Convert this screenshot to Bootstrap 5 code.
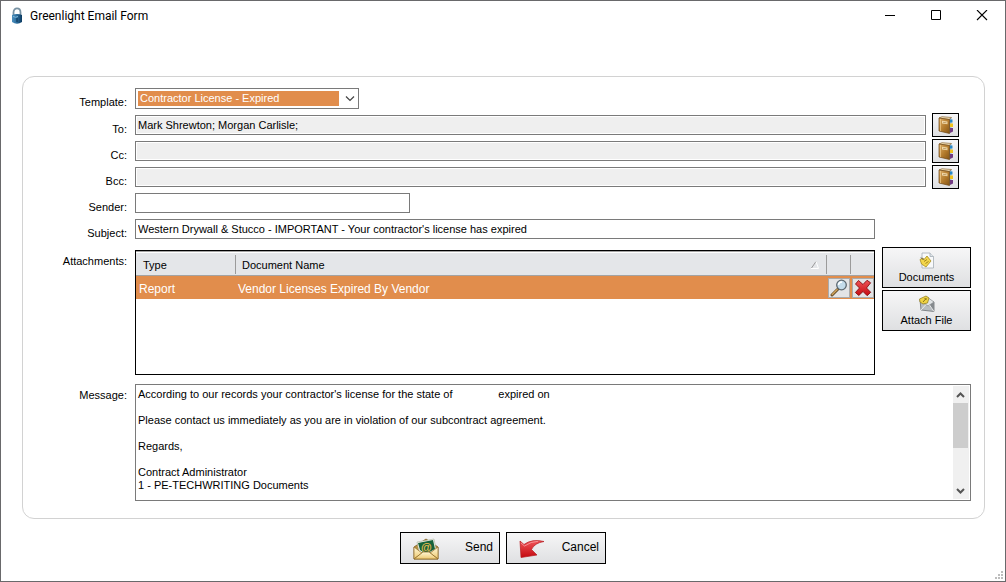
<!DOCTYPE html>
<html lang="en">
<head>
<meta charset="utf-8">
<meta name="viewport" content="width=device-width, initial-scale=1">
<title>Greenlight Email Form</title>
<link href="https://cdn.jsdelivr.net/npm/bootstrap@5.3.0/dist/css/bootstrap.min.css" rel="stylesheet">
<style>
  body { font-family: "Liberation Sans", Arial, sans-serif; font-size: 11px; line-height: 16px; color: #000; background: #fff; }
  .app-window { border: 1px solid #69696b; }
  .title-bar { height: 30px; font-family: Roboto, "Open Sans", sans-serif; font-size: 12px; padding-left: 9px; }
  .title-bar h1 { font-size: 12px; line-height: 16px; font-weight: 400; padding-left: 6px; }
  .caption-btn { width: 46px; height: 29px; border: 0; background: none; padding: 0; }
  .form-panel { margin: 45px 20px 0 21px; border: 1px solid #d2d2d2; border-radius: 12px; padding: 10px 13px 17px 0; }
  .field-row { display: grid; grid-template-columns: 104px minmax(0, 1fr); column-gap: 8px; margin-bottom: 2px; }
  .field-row > label, .field-row > .field-caption { text-align: right; margin-top: 8px; }
  .field-body { min-height: 24px; display: flex; align-items: center; }
  .template-row .field-body { align-items: flex-start; padding-top: 1px; }
  .template-row > label { margin-top: 7px; }
  .box { height: 20px; border: 1px solid #7a7a7a; border-radius: 0; padding: 0 2px; font-size: 11px; line-height: 16px; color: #000; background: #fff; outline: 0; }
  .box[readonly] { background: #efefef; box-shadow: inset 0 0 0 1px #fff; }
  .sender-box { width: 275px; }
  .template-pick { width: 224px; }
  .template-pick select { display: block; appearance: none; width: 100%; height: 21px; padding: 0 22px 1px 4px; color: #fff; border: 1px solid #7a7a7a; border-radius: 0; font-size: 11px; outline: 0;
    background: linear-gradient(#e18d4c, #e18d4c) 2px 2px / calc(100% - 21px) 15px no-repeat #fff; }
  .template-pick select option { color: #000; }
  .template-pick svg { right: 4px; top: 8px; pointer-events: none; }
  .tool-btn { border: 1px solid #000; border-radius: 0; background: linear-gradient(#f6f6f7, #dfe0e2); color: #000; padding: 0; }
  .book-btn { width: 27px; height: 24px; margin: 0 12px 0 6px; }
  .short-field { margin-right: 96px; }
  .side-btns { flex: 0 0 89px; margin-left: 7px; gap: 2px; }
  .side-btns .tool-btn { height: 41px; font-size: 11px; line-height: 14px; }
  .attach-row { margin-top: 6px; margin-bottom: 9px; }
  .attach-row > .field-caption { margin-top: 6px; }
  .attach-box { height: 125px; margin-top: 3px; border: 1px solid #000; min-width: 0; }
  .attach-table { width: 100%; table-layout: fixed; border-collapse: separate; border-spacing: 0; }
  .attach-table th { height: 25px; font-weight: 400; background: #e4e6e9; border-bottom: 1px solid #a3a3a3; border-top: 1px solid #a3a3a3; padding: 3px 7px 0; box-shadow: inset 0 1px #fff; }
  .attach-table th + th { background: linear-gradient(#9b9b9b, #9b9b9b) 0 3px / 1px 19px no-repeat #e4e6e9; }
  .attach-table td { height: 23px; background: #e18d4c; color: #fff; font-size: 12px; padding: 3px 3px 0; }
  .attach-table td.act { padding: 0 0 0 2px; vertical-align: middle; }
  .col-type { width: 99px; }
  .col-act { width: 24px; }
  .cell-btn { width: 22px; height: 20px; border: 1px solid #aaa; background: #e3e4e6; padding: 0; display: flex; align-items: center; justify-content: center; }
  .message-row { margin-bottom: 0; }
  .message-row > label { margin-top: 3px; }
  .message-box { height: 117px; border: 1px solid #7a7a7a; }
  .message-box textarea { border: 0; outline: 0; resize: none; overflow: hidden; padding: 3px 2px 0; font-size: 11px; line-height: 13px; color: #000; }
  .scroll-rail { width: 16px; margin: 1px; background: #f0f0f0; }
  .scroll-rail .rail-thumb { height: 45px; width: 15px; background: #cdcdcd; }
  .scroll-rail svg { height: 17px; width: 15px; }
  .bottom-btns { margin-top: 13px; gap: 6px; }
  .bottom-btns .tool-btn { width: 100px; height: 32px; font-size: 12px; padding: 2px 6px 0 12px; }
  .bottom-btns span { padding-bottom: 4px; }
  .size-grip { right: 2px; bottom: 2px; }
  svg { display: block; flex: none; }
</style>
</head>
<body>
<svg width="0" height="0" class="position-absolute" aria-hidden="true">
  <defs>
    <linearGradient id="leather" x1="0" x2="1" y1="0" y2="1"><stop offset="0" stop-color="#dcae68"/><stop offset=".55" stop-color="#b37b2c"/><stop offset="1" stop-color="#835416"/></linearGradient>
    <linearGradient id="redShade" x1="0" x2="0" y1="0" y2="1"><stop offset="0" stop-color="#f0565a"/><stop offset="1" stop-color="#c4090f"/></linearGradient>
    <linearGradient id="steel" x1="0" x2="1"><stop offset="0" stop-color="#4c8fbd"/><stop offset=".45" stop-color="#2c6f9f"/><stop offset="1" stop-color="#0c3a60"/></linearGradient>
    <linearGradient id="paper" x1="0" x2="0" y1="0" y2="1"><stop offset="0" stop-color="#fff8d8"/><stop offset="1" stop-color="#edc870"/></linearGradient>
    <symbol id="address-book" viewBox="0 0 16 18">
      <path d="M11 2l2.500 0v13l-2.500 2.500z" fill="#9cbbd3"/>
      <path d="M12 3.500h2.500v3H12z" fill="#2687c7"/><path d="M12 7.500h3v3.500h-3z" fill="#f0c31c"/><path d="M12 12h3v3.500l-3 1.500z" fill="#713a82"/>
      <path d="M1 2l3-1.300 9.500 .8L11 3.500z" fill="#f4e3bd" stroke="#79501d" stroke-width=".6"/>
      <path d="M1 2l10.500 1.500v14L1 15z" fill="url(#leather)" stroke="#6d4514" stroke-width=".7"/>
      <path d="M2.500 3v12" stroke="#f0ce91" stroke-width=".7"/>
      <path d="M4 4.800l5.500 .8v2.700L4 7.500z" fill="#f0d7a8"/><path d="M5 6.300l3.500 .5" stroke="#a07a40" stroke-width=".6"/>
    </symbol>
  </defs>
</svg>

<div class="app-window min-vh-100 position-relative">
  <header class="title-bar d-flex align-items-center">
    <svg width="14" height="18" viewBox="0 0 14 18" aria-hidden="true">
      <path d="M3.500 9V5.500C3.500 0 10.500 0 10.500 5.500V9" fill="none" stroke="#7892a3" stroke-width="1.800"/>
      <path d="M2 8q5-2 10 0v7q-5 3.500-10 0z" fill="url(#steel)"/>
      <path d="M3 9.500q3 1.500 5 0" stroke="#83b9d9" fill="none"/><path d="M7 11v4" stroke="#0a3151"/>
    </svg>
    <h1 class="mb-0 flex-grow-1">Greenlight Email Form</h1>
    <button class="caption-btn d-flex align-items-center justify-content-center" type="button" aria-label="Minimize"><svg width="12" height="12"><path d="M1 5.500h10" stroke="#000"/></svg></button>
    <button class="caption-btn d-flex align-items-center justify-content-center" type="button" aria-label="Maximize"><svg width="12" height="12"><path d="M1.500 .5h9v9h-9z" fill="none" stroke="#000"/></svg></button>
    <button class="caption-btn d-flex align-items-center justify-content-center" type="button" aria-label="Close"><svg width="12" height="12"><path d="M1 0l10 10M11 0L1 10" stroke="#000" stroke-width="1.100"/></svg></button>
  </header>

  <form>
    <main class="form-panel">
      <div class="field-row template-row">
        <label for="template">Template:</label>
        <div class="field-body">
          <div class="template-pick position-relative">
            <select id="template"><option>Contractor License - Expired</option></select>
            <svg class="position-absolute" width="10" height="6"><path d="M1 .5l4 4 4-4" fill="none" stroke="#444" stroke-width="1.200"/></svg>
          </div>
        </div>
      </div>
      <div class="field-row">
        <label for="to">To:</label>
        <div class="field-body">
          <input class="box flex-grow-1" id="to" type="text" readonly value="Mark Shrewton; Morgan Carlisle;">
          <button class="tool-btn book-btn d-flex align-items-center justify-content-center" type="button" aria-label="Choose To recipients"><svg width="16" height="18"><use href="#address-book"/></svg></button>
        </div>
      </div>
      <div class="field-row">
        <label for="cc">Cc:</label>
        <div class="field-body">
          <input class="box flex-grow-1" id="cc" type="text" readonly>
          <button class="tool-btn book-btn d-flex align-items-center justify-content-center" type="button" aria-label="Choose Cc recipients"><svg width="16" height="18"><use href="#address-book"/></svg></button>
        </div>
      </div>
      <div class="field-row">
        <label for="bcc">Bcc:</label>
        <div class="field-body">
          <input class="box flex-grow-1" id="bcc" type="text" readonly>
          <button class="tool-btn book-btn d-flex align-items-center justify-content-center" type="button" aria-label="Choose Bcc recipients"><svg width="16" height="18"><use href="#address-book"/></svg></button>
        </div>
      </div>
      <div class="field-row">
        <label for="sender">Sender:</label>
        <div class="field-body"><input class="box sender-box" id="sender" type="text"></div>
      </div>
      <div class="field-row">
        <label for="subject">Subject:</label>
        <div class="field-body"><input class="box flex-grow-1 short-field" id="subject" type="text" value="Western Drywall &amp; Stucco - IMPORTANT - Your contractor's license has expired"></div>
      </div>

      <div class="field-row attach-row">
        <span class="field-caption" id="attach-caption">Attachments:</span>
        <div class="d-flex align-items-start">
          <div class="attach-box flex-grow-1">
            <table class="attach-table" aria-labelledby="attach-caption">
              <colgroup><col class="col-type"><col><col class="col-act"><col class="col-act"></colgroup>
              <thead><tr>
                <th>Type</th>
                <th><span class="d-flex justify-content-between align-items-center">Document Name <svg width="8" height="8"><path d="M.5 7L5 .5" stroke="#999"/><path d="M5 .5L7.500 7.500H0" fill="none" stroke="#fff"/></svg></span></th>
                <th></th><th></th>
              </tr></thead>
              <tbody><tr>
                <td>Report</td>
                <td>Vendor Licenses Expired By Vendor</td>
                <td class="act"><button class="cell-btn" type="button" aria-label="View document">
                  <svg width="18" height="18" viewBox="0 0 18 18"><path d="M2 16l5.500-5.500" stroke="#69502c" stroke-width="3" stroke-linecap="round"/><path d="M2.200 15.500l5-5" stroke="#d3a55c" stroke-width="1.300" stroke-linecap="round"/><circle cx="11.500" cy="6" r="4.800" fill="#c4dceb" stroke="#5d6870" stroke-width="1.300"/><path d="M8.500 6q.3-3 3.500-3" fill="none" stroke="#fff" stroke-width="1.500"/></svg></button></td>
                <td class="act"><button class="cell-btn" type="button" aria-label="Remove document">
                  <svg width="18" height="18" viewBox="0 0 18 18"><path d="M4.500 1.500L9 5.500l4-4.200 3.600 2.500L12.500 9l4.200 4.300-3.500 3.400L9 12.500l-4.200 4-3.400-3L5.500 9 1.500 5z" fill="url(#redShade)" stroke="#870c10" stroke-width=".9" stroke-linejoin="round"/></svg></button></td>
              </tr></tbody>
            </table>
          </div>
          <div class="side-btns d-flex flex-column">
            <button class="tool-btn d-flex flex-column align-items-center justify-content-center" type="button">
              <svg width="16" height="18" viewBox="0 0 16 18"><path d="M3 1h8l3.500 3.500V16H3z" fill="#f8f9fa" stroke="#a4adb5" stroke-width=".8"/><path d="M11 1v3.500h3.500" fill="#dfe5e9" stroke="#a4adb5" stroke-width=".8"/><path d="M1 7.500L4 6l1 1.500L8 4l4 5-5 6-4.500-3z" fill="#f3d64b" stroke="#9c8113" stroke-width=".7"/><path d="M5 9.500l3-2M6.500 11.500l3-2" stroke="#8f7410" stroke-width=".8"/><path d="M4.500 8L2 5.500" stroke="#555"/></svg>
              Documents</button>
            <button class="tool-btn d-flex flex-column align-items-center justify-content-center" type="button">
              <svg width="18" height="18" viewBox="0 0 18 18"><path d="M2 5l14 2v9.500L3 15z" fill="#b8bdc1" stroke="#6b7074" stroke-width=".8"/><path d="M16 7v9.500L11 10z" fill="#858a8e"/><path d="M2 5l8 6 6-4-7-5z" fill="#e1e4e6" stroke="#85898d" stroke-width=".7"/><path d="M3 15l5-5.500M16 16.500l-4.500-6.500" stroke="#f1f2f3" stroke-width=".9"/><path d="M1.500 4L8 1l3 2-1.500 5L5 9 2 7z" fill="#efd345" stroke="#8c7819" stroke-width=".7"/><path d="M5 7l3.500-4M6.500 3l2 2" stroke="#6d5b0a" stroke-width=".8"/></svg>
              Attach File</button>
          </div>
        </div>
      </div>

      <div class="field-row message-row">
        <label for="message">Message:</label>
        <div class="message-box d-flex">
          <textarea class="flex-grow-1" id="message">
According to our records your contractor's license for the state of               expired on

Please contact us immediately as you are in violation of our subcontract agreement.

Regards,

Contract Administrator
1 - PE-TECHWRITING Documents</textarea>
          <div class="scroll-rail d-flex flex-column" aria-hidden="true">
            <svg viewBox="0 0 15 17"><path d="M4 11l3.500-3.500L11 11" fill="none" stroke="#555" stroke-width="2"/></svg>
            <div class="rail-thumb"></div>
            <svg class="mt-auto" viewBox="0 0 15 17"><path d="M4 7l3.500 3.500L11 7" fill="none" stroke="#555" stroke-width="2"/></svg>
          </div>
        </div>
      </div>
    </main>

    <footer class="bottom-btns d-flex justify-content-center">
      <button class="tool-btn d-flex align-items-center justify-content-between" type="submit">
        <svg width="26" height="22" viewBox="0 0 26 22"><path d="M1 9L13 1l12 8v12H1z" fill="#b88f3d" stroke="#7c5c20" stroke-width=".8"/><path d="M4 4l17-3 2 10-9 6-8-3z" fill="#f5f6ed" stroke="#9aa58f" stroke-width=".5"/><path d="M5 5l15-3 2 9-9 5-6-4z" fill="#17633a"/><text x="8" y="13" font-size="11" font-weight="700" fill="#f0bf51">@</text><path d="M1 9l8 6-8 6zM25 9l-8 6 8 6z" fill="url(#paper)" stroke="#8f6c28" stroke-width=".7"/><path d="M1 21l9-7h6l9 7z" fill="url(#paper)" stroke="#8f6c28" stroke-width=".8"/></svg>
        <span>Send</span></button>
      <button class="tool-btn d-flex align-items-center justify-content-between" type="button">
        <svg width="26" height="20" viewBox="0 0 26 20"><path d="M1 2l4 3.500Q13 -.5 25 2.500 15.500 4 12.500 10.500L18 16 2 18.500z" fill="url(#redShade)" stroke="#b51a20" stroke-width=".7" stroke-linejoin="round"/><path d="M2 4l3.500 3Q12 2.500 19 2.300" fill="none" stroke="#f9a0a3" stroke-width=".8"/></svg>
        <span>Cancel</span></button>
    </footer>
  </form>
  <svg class="size-grip position-absolute" width="8" height="8" aria-hidden="true"><path d="M6 0h2v2h-2zM3 3h2v2h-2zM6 3h2v2h-2zM0 6h2v2h-2zM3 6h2v2h-2zM6 6h2v2h-2z" fill="#bdbdbd"/></svg>
</div>
<script src="https://cdn.jsdelivr.net/npm/bootstrap@5.3.0/dist/js/bootstrap.bundle.min.js"></script>
</body>
</html>
